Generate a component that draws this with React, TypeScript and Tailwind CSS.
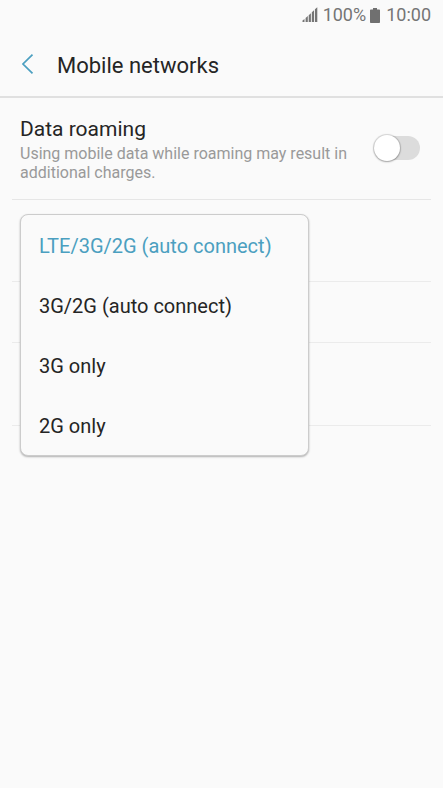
import { useState } from 'react'
import clsx from 'clsx'

const NETWORK_MODES = ['LTE/3G/2G (auto connect)', '3G/2G (auto connect)', '3G only', '2G only']

function StatusBar(): React.JSX.Element {
  return (
    <div className="flex h-[30px] items-center justify-end pr-3 text-lg leading-5 text-[#757575]">
      <svg viewBox="0 0 16 16" className="mr-[5px] h-4 w-4" fill="#757575" aria-hidden="true">
        <path d="M0.5 15v-1.5l2-1.5v3zM3.6 15v-4l2.2-1.9V15zM6.7 15V8.2l2.2-2V15zM9.8 15V5.2l2.2-2V15zM12.9 15V2.2l2.4-2V15z" />
      </svg>
      <span>100%</span>
      <svg viewBox="0 0 10 15" className="mx-1 h-[15px] w-[10px]" fill="#707070" aria-hidden="true">
        <path d="M3 0h4v1.4h2.2a.8.8 0 0 1 .8.8v12a.8.8 0 0 1-.8.8H.8a.8.8 0 0 1-.8-.8v-12a.8.8 0 0 1 .8-.8H3z" />
      </svg>
      <span className="ml-0.5">10:00</span>
    </div>
  )
}

function Header(): React.JSX.Element {
  return (
    <header className="flex h-[68px] items-center border-b-2 border-[#e0e0e0] pt-1.5 pl-5">
      <button type="button" aria-label="Back" className="mr-[21px] flex w-4 justify-center pb-1">
        <svg viewBox="0 0 12 20" className="h-5 w-3" fill="none" stroke="#4b9fc0" strokeWidth="1.7">
          <path d="M10.5 0.7L1 10L10.5 19.3" />
        </svg>
      </button>
      <h1 className="text-[22px] leading-7 text-[#252525]">Mobile networks</h1>
    </header>
  )
}

function RoamingRow(): React.JSX.Element {
  return (
    <label className="mx-3 flex items-center border-b border-[#e6e6e6] pt-4 pr-[11px] pb-[17px] pl-2">
      <span className="flex-1">
        <span className="block text-[21px] leading-[30px] text-[#252525]">Data roaming</span>
        <span className="block max-w-[340px] text-base leading-[19px] text-[#999999]">
          Using mobile data while roaming may result in additional charges.
        </span>
      </span>
      <span className="flex h-[27px] w-[46px] shrink-0 items-center">
        <input type="checkbox" role="switch" aria-label="Data roaming" className="peer sr-only" />
        <span className="flex h-6 w-full items-center rounded-full bg-[#dcdcdc] peer-checked:justify-end peer-checked:bg-[#4b9fc0]">
          <span className="h-[26px] w-[26px] shrink-0 rounded-full bg-white shadow-[0_0_1px_1px_rgba(0,0,0,0.15),0_1px_2px_rgba(0,0,0,0.25)]" />
        </span>
      </span>
    </label>
  )
}

function NetworkModeMenu(): React.JSX.Element {
  const [mode, setMode] = useState(NETWORK_MODES[0])

  return (
    <div
      role="menu"
      aria-label="Network mode"
      className="absolute top-[14px] left-5 w-[289px] rounded-lg border border-[#cccccc] bg-[#fafafa] shadow-[0_1px_2px_rgba(0,0,0,0.3)]"
    >
      {NETWORK_MODES.map((item) => (
        <button
          key={item}
          type="button"
          role="menuitemradio"
          aria-checked={item === mode}
          onClick={() => setMode(item)}
          className={clsx(
            'flex h-[60px] w-full items-center px-[18px] pt-0.5 text-left text-xl leading-6',
            item === mode ? 'text-[#4b9fc0]' : 'text-[#252525]'
          )}
        >
          {item}
        </button>
      ))}
    </div>
  )
}

export default function App(): React.JSX.Element {
  return (
    <div className="min-h-screen bg-[#fafafa] font-[Roboto,sans-serif]">
      <StatusBar />
      <Header />
      <main>
        <RoamingRow />
        {/* Rows that lie behind the open menu */}
        <div className="relative">
          <div className="mx-3 h-[82px] border-b border-[#ebebeb]" />
          <div className="mx-3 h-[61px] border-b border-[#ebebeb]" />
          <div className="mx-3 h-[83px] border-b border-[#ebebeb]" />
          <NetworkModeMenu />
        </div>
      </main>
    </div>
  )
}
